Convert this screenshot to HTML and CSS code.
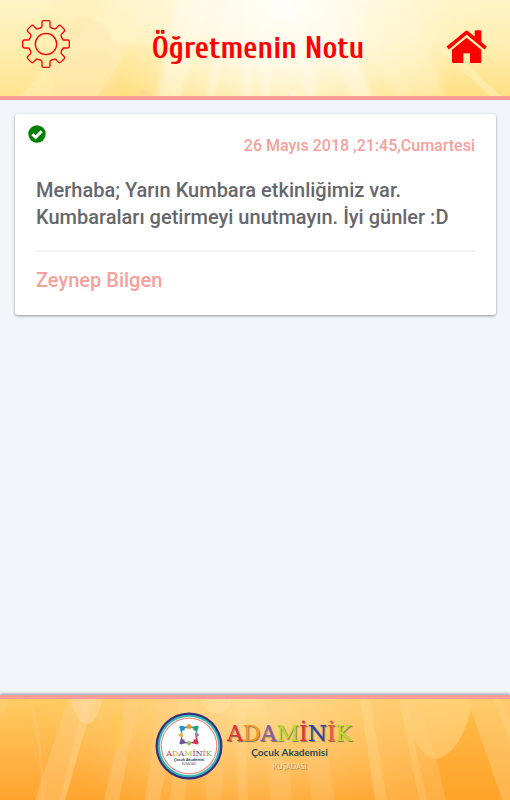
FILE: index.html
```html
<!DOCTYPE html>
<html lang="tr">
<head>
    <meta charset="UTF-8">
    <meta name="viewport" content="width=device-width, initial-scale=1">
    <title>Öğretmenin Notu</title>
    <link rel="stylesheet" href="styles.css">
</head>
<body>
    <header class="header">
        <svg class="rays" viewBox="0 0 510 96" preserveAspectRatio="none" aria-hidden="true">
            <defs>
                <linearGradient id="sky" x1="0" y1="0" x2="0" y2="1">
                    <stop offset="0" stop-color="#fff3c6"/>
                    <stop offset="0.45" stop-color="#ffefb4"/>
                    <stop offset="1" stop-color="#ffe083"/>
                </linearGradient>
                <radialGradient id="sun" gradientUnits="userSpaceOnUse" cx="0" cy="0" r="1" gradientTransform="translate(285 0) scale(195 165)">
                    <stop offset="0" stop-color="#fffefa"/>
                    <stop offset="0.4" stop-color="#fffbea" stop-opacity="0.9"/>
                    <stop offset="1" stop-color="#fff6d0" stop-opacity="0"/>
                </radialGradient>
                <filter id="soft" x="-10%" y="-10%" width="120%" height="120%">
                    <feGaussianBlur stdDeviation="2"/>
                </filter>
            </defs>
            <rect width="510" height="96" fill="url(#sky)"/>
            <path d="M0 45L62 0H120L20 96H0z" fill="#ffeeb0" opacity="0.3"/>
            <path d="M112 0H160L98 96H20z" fill="#fff2c8" opacity="0.45"/>
            <ellipse cx="85" cy="70" rx="33" ry="52" fill="#ffe0a8" opacity="0.25"/>
            <path d="M118 45V96H150L170 45z" fill="#ffdf78" opacity="0.3" filter="url(#soft)"/>
            <rect width="510" height="96" fill="url(#sun)"/>
            <g fill="#fffdf2" opacity="0.4" filter="url(#soft)">
                <path d="M178 0H210L178 106H155zM226 0H234L212 106H205zM245 0H251L251 106H243zM258 0H265L271 106H262zM292 0H300L318 106H305zM312 0H330L376 106H355z"/>
            </g>
            <path d="M350 0H410L445 96H395z" fill="#fff8d8" opacity="0.3" filter="url(#soft)"/>
            <path d="M435 45L462 60L501 96H490z" fill="#fff8d8" opacity="0.35"/>
            <circle cx="144" cy="98" r="8" fill="#ffd2a0" opacity="0.5"/>
            <circle cx="293" cy="94" r="3" fill="#fffdf2" opacity="0.6" filter="url(#soft)"/>
        </svg>
        <button class="icon-button" type="button" aria-label="Ayarlar">
            <svg class="gear" viewBox="-72 -72 144 144">
                <g fill="none" stroke="#f00" stroke-width="4" stroke-linecap="round">
                    <path id="tooth" d="M-19.5 -47L-14 -50Q-12 -51 -12 -54V-65Q-12 -70 -7 -70H7Q12 -70 12 -65V-54Q12 -51 14 -50L19.5 -47"/>
                    <use href="#tooth" transform="rotate(45)"/>
                    <use href="#tooth" transform="rotate(90)"/>
                    <use href="#tooth" transform="rotate(135)"/>
                    <use href="#tooth" transform="rotate(180)"/>
                    <use href="#tooth" transform="rotate(225)"/>
                    <use href="#tooth" transform="rotate(270)"/>
                    <use href="#tooth" transform="rotate(315)"/>
                    <circle r="32"/>
                </g>
            </svg>
        </button>
        <h1>Öğretmenin Notu</h1>
        <a class="icon-button" href="#" aria-label="Ana sayfa">
            <svg class="home" viewBox="0 0 126 102">
                <path d="M5 54L62 7L119 54" fill="none" stroke="#f00" stroke-width="11" stroke-linejoin="round"/>
                <path d="M86 4Q86 1 89 1H103Q106 1 106 4V40L86 24z" fill="#f00"/>
                <path d="M62 23L106 59V96Q106 99 103 99H72V70H52V99H21Q18 99 18 96V59z" fill="#f00"/>
            </svg>
        </a>
    </header>

    <main class="content">
        <article class="note">
            <svg class="check" viewBox="0 0 18 18" role="img" aria-label="Okundu">
                <circle cx="9" cy="9" r="8.7" fill="#008000"/>
                <path d="M4.3 9.2L7.6 12.4L13.7 6.3" fill="none" stroke="#fff" stroke-width="2.9"/>
            </svg>
            <p class="date">26 Mayıs 2018 ,21:45,Cumartesi</p>
            <p class="message">Merhaba; Yarın Kumbara etkinliğimiz var. Kumbaraları getirmeyi unutmayın. İyi günler :D</p>
            <p class="teacher">Zeynep Bilgen</p>
        </article>
    </main>

    <footer class="footer">
        <svg class="rays" viewBox="0 0 510 101" preserveAspectRatio="none" aria-hidden="true">
            <defs>
                <linearGradient id="dusk" x1="0" y1="0" x2="0" y2="1">
                    <stop offset="0" stop-color="#ffcc62"/>
                    <stop offset="0.5" stop-color="#ffb649"/>
                    <stop offset="1" stop-color="#ffa52f"/>
                </linearGradient>
                <radialGradient id="glow" gradientUnits="userSpaceOnUse" cx="0" cy="0" r="1" gradientTransform="translate(250 0) scale(210 135)">
                    <stop offset="0" stop-color="#ffe09a" stop-opacity="0.9"/>
                    <stop offset="1" stop-color="#ffcc7a" stop-opacity="0"/>
                </radialGradient>
            </defs>
            <rect width="510" height="101" fill="url(#dusk)"/>
            <rect width="510" height="101" fill="url(#glow)"/>
            <path d="M68 0H94L65 101H35zM127 0H139L119 101H104zM158 0H180L160 101H145z" fill="#ffd08a" opacity="0.4"/>
            <path d="M205 0H228L222 101H206zM265 0H285L292 101H270zM300 0H318L335 101H312z" fill="#ffd08a" opacity="0.25"/>
            <path d="M84 0H94L65 101H60zM180 0H195L185 101H170zM236 0H246L248 101H238z" fill="#ffe2a8" opacity="0.2"/>
            <path d="M71 0Q75 25 88 25Q98 23 102 0z" fill="#ffdca8" opacity="0.5"/>
            <path d="M202 0Q205 14 216 14Q228 14 232 0z" fill="#ffe6b0" opacity="0.4"/>
            <path d="M0 0H10L0 22zM31 0Q43 40 44 101H42Q40 40 28 0z" fill="#ffd08a" opacity="0.3"/>
            <ellipse cx="118" cy="31" rx="7" ry="21" fill="#ffca3e" opacity="0.3"/>
            <path d="M360 0H370L387 101H375zM399 0H405L427 101H419zM493 0L510 40V22L500 0z" fill="#ffdf9a" opacity="0.35"/>
            <path d="M420 0L446 101H427L405 0zM370 0H399L419 101H387z" fill="#ffca7c" opacity="0.25"/>
            <path d="M405 0Q412 58 437 60Q460 58 473 0z" fill="#ffdd94" opacity="0.35"/>
            <path d="M468 0H510V101H502z" fill="#ffcb78" opacity="0.4"/>
            <path d="M471 12Q462 50 437 60L446 101H502z" fill="#ff9b10" opacity="0.25"/>
        </svg>
        <svg class="emblem" viewBox="0 0 68 68" role="img" aria-label="Adaminik">
            <circle cx="34" cy="34" r="33.5" fill="#3b2d7d"/>
            <circle cx="34" cy="34" r="31.3" fill="#35b9b3"/>
            <circle cx="34" cy="34" r="29.2" fill="#e6f6f4"/>
            <circle cx="34" cy="34" r="28.3" fill="#f4837d"/>
            <circle cx="34" cy="34" r="27.2" fill="#fff"/>
            <!-- eight children in a ring -->
            <g transform="translate(34 23)">
                <path d="M0 -11.5L2.2 -9.5L4 -7L0 -6L-4 -7L-2.2 -9.5z" fill="#f09a35"/>
                <path d="M10.5 0L8 2.2L6.5 3L6 0L6.5 -3L8 -2.2z" fill="#a878b4"/>
                <path d="M0 11L2 9L3 7L0 6L-3 7L-2 9z" fill="#8cc06a"/>
                <path d="M-11 0L-8 -2L-6.5 -3L-6 0L-6.5 3L-8 2z" fill="#d9b640"/>
                <g id="kid" fill="#1fa37d">
                    <circle cx="7.8" cy="-7.8" r="1.8"/>
                    <path d="M1.5 -8L7 -9L9 -7L8 -1.5L6.2 -4.5L4.5 -4.5L4.5 -6.2z"/>
                </g>
                <g fill="#d9304f" transform="rotate(90)">
                    <circle cx="7.8" cy="-7.8" r="1.8"/>
                    <path d="M1.5 -8L7 -9L9 -7L8 -1.5L6.2 -4.5L4.5 -4.5L4.5 -6.2z"/>
                </g>
                <g fill="#74509d" transform="rotate(180)">
                    <circle cx="7.8" cy="-7.8" r="1.8"/>
                    <path d="M1.5 -8L7 -9L9 -7L8 -1.5L6.2 -4.5L4.5 -4.5L4.5 -6.2z"/>
                </g>
                <g fill="#2590c8" transform="rotate(270)">
                    <circle cx="7.8" cy="-7.8" r="1.8"/>
                    <path d="M1.5 -8L7 -9L9 -7L8 -1.5L6.2 -4.5L4.5 -4.5L4.5 -6.2z"/>
                </g>
            </g>
            <text class="emblem-name" x="34" y="44" text-anchor="middle"><tspan fill="#d92b3a">A</tspan><tspan fill="#e98b2a">D</tspan><tspan fill="#7b4f9d">A</tspan><tspan fill="#a5bf2f">M</tspan><tspan fill="#d92b3a">İ</tspan><tspan fill="#2f50a8">N</tspan><tspan fill="#e9602a">İ</tspan><tspan fill="#7db532">K</tspan></text>
            <text class="emblem-sub" x="34" y="49" text-anchor="middle">Çocuk Akademisi</text>
            <text class="emblem-city" x="34" y="53" text-anchor="middle">KUŞADASI</text>
        </svg>
        <div class="brand">
            <div class="brand-name"><span class="red">A</span><span class="orange">D</span><span class="purple">A</span><span class="lime">M</span><span class="red">İ</span><span class="blue">N</span><span class="coral">İ</span><span class="lime">K</span></div>
            <div class="brand-sub">Çocuk Akademisi</div>
            <div class="brand-city">KUŞADASI</div>
        </div>
    </footer>
</body>
</html>
```
FILE: styles.css
```css
* {
    box-sizing: border-box;
}

body {
    font-family: Roboto, "Liberation Sans", sans-serif;
    background-color: #f2f5fa;
    margin: 0;
    min-height: 100vh;
    display: flex;
    flex-direction: column;
}

.header {
    position: relative;
    display: flex;
    align-items: center;
    justify-content: space-between;
    height: 100px;
    padding: 0 22px;
    border-bottom: 4px solid #f99c98;
}

/* light beams behind the bars */
.rays {
    position: absolute;
    inset: 0;
    width: 100%;
    height: 100%;
}

.header h1 {
    position: relative;
    margin: 0;
    font-family: "Cuprum", "Roboto Condensed", Roboto, sans-serif;
    font-size: 31px;
    font-weight: 600;
    color: #f00;
}

.icon-button {
    position: relative;
    display: flex;
    padding: 0;
    border: none;
    background: none;
    cursor: pointer;
}

.gear {
    width: 48px;
    height: 48px;
    margin-bottom: 8px;
}

.home {
    width: 42px;
    height: 34px;
    margin-bottom: 2px;
}

.content {
    flex: 1;
    padding: 14px 14px 14px 15px;
}

.note {
    position: relative;
    padding: 21px;
    background-color: #fff;
    border-radius: 3px;
    box-shadow: 0 1px 3px rgba(0, 0, 0, 0.4);
}

.check {
    position: absolute;
    top: 11px;
    left: 13px;
    width: 18px;
    height: 18px;
}

.note p {
    margin: 0;
    font-weight: 500;
}

.note .date {
    font-size: 16px;
    line-height: 22px;
    text-align: right;
    color: #f99f9b;
}

.note .message {
    margin-top: 20px;
    padding-bottom: 19px;
    border-bottom: 2px solid #f4f4f4;
    font-size: 20px;
    line-height: 27px;
    color: #66676c;
}

.note .teacher {
    margin-top: 15px;
    font-size: 20px;
    line-height: 27px;
    color: #f99f9b;
}

.footer {
    position: relative;
    display: flex;
    align-items: center;
    justify-content: center;
    gap: 4px;
    height: 105px;
    padding-right: 3px;
    padding-bottom: 7px;
    border-top: 4px solid #f99c98;
    box-shadow: 0 -1px 3px rgba(0, 0, 0, 0.4);
}

.emblem {
    position: relative;
    width: 68px;
    height: 68px;
}

.emblem-name {
    font: 8px "DejaVu Serif", serif;
    stroke-width: 0;
}

.emblem-sub {
    font: bold 4px Lato, sans-serif;
    fill: #26324a;
}

.emblem-city {
    font: 3px Lato, sans-serif;
    fill: #555;
}

.brand {
    position: relative;
    text-align: center;
}

.brand-name {
    font-family: "DejaVu Serif", serif;
    font-size: 22px;
    line-height: 24px;
    text-shadow: 1px 1px 1px rgba(70, 80, 60, 0.7);
}

.brand-sub {
    font-family: Lato, sans-serif;
    font-size: 10px;
    font-weight: bold;
    line-height: 12px;
    color: #1f4a55;
}

.brand-city {
    margin-top: 4px;
    font-family: Lato, sans-serif;
    font-size: 7px;
    line-height: 8px;
    color: #ffdf9f;
    text-shadow: 1px 1px 0 #a08c60;
}

.red { color: #e62b3f; }
.orange { color: #f0982f; }
.purple { color: #8a5ba6; }
.lime { color: #b9d92f; }
.blue { color: #2746b0; }
.coral { color: #f0563a; }
```
